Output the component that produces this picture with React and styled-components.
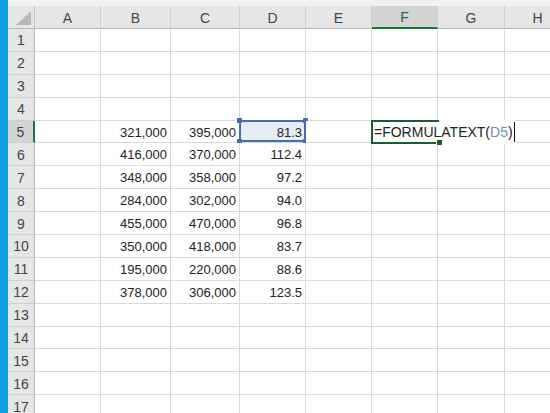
import styled, { createGlobalStyle } from "styled-components";

const GlobalStyle = createGlobalStyle`
  * { box-sizing: border-box; }
  body {
    margin: 0;
    background: #ffffff;
    font-family: "Liberation Sans", Arial, sans-serif;
  }
`;

const Page = styled.div`
  width: 550px;
  height: 413px;
  display: flex;
  overflow: hidden;
`;

const Strip = styled.div`
  width: 8px;
  flex-shrink: 0;
  background: #0e9fe2;
`;

const Sheet = styled.div`
  flex: 1;
  display: flex;
  flex-direction: column;
  background: #ffffff;
`;

const TopBand = styled.div`
  height: 6px;
  flex-shrink: 0;
  background: #f1f1f1;
`;

const Grid = styled.div`
  display: grid;
  grid-template-columns: 27px 66px 70px 69px 66px 66px 66px 67px 66px;
  grid-template-rows: 23px;
  grid-auto-rows: 22.9px;
`;

const Corner = styled.div`
  background: #e6e6e6;
  border-right: 1px solid #c4c4c4;
  border-bottom: 1px solid #b8b8b8;
  display: flex;
  align-items: flex-end;
  justify-content: flex-end;
  padding: 0 3px 3px 0;
`;

const ColHead = styled.div`
  background: ${(p) => (p.$active ? "#d3d3d3" : "#e6e6e6")};
  border-right: 1px solid #cfcfcf;
  border-bottom: ${(p) => (p.$active ? "2px solid #217346" : "1px solid #b8b8b8")};
  color: ${(p) => (p.$active ? "#2f5f42" : "#444444")};
  font-size: 14px;
  display: flex;
  align-items: center;
  justify-content: center;
  padding-top: 1px;
`;

const RowHead = styled.div`
  background: ${(p) => (p.$active ? "#d3d3d3" : "#e6e6e6")};
  border-right: ${(p) => (p.$active ? "2px solid #217346" : "1px solid #b8b8b8")};
  border-bottom: 1px solid #cfcfcf;
  color: #444444;
  font-size: 14px;
  display: flex;
  align-items: center;
  justify-content: center;
  padding-top: 1px;
`;

const Cell = styled.div`
  position: relative;
  background: ${(p) => (p.$refd ? "#e7edf7" : "#ffffff")};
  border-right: 1px solid #dadada;
  border-bottom: 1px solid #dadada;
  color: #222222;
  font-size: 13px;
  display: flex;
  align-items: center;
  justify-content: flex-end;
  padding: 1px 3px 0 0;
  white-space: nowrap;
`;

const RefBox = styled.div`
  position: absolute;
  left: -1px;
  top: -1px;
  right: -1px;
  bottom: 0;
  border: 2px solid #4a6da8;
  pointer-events: none;
`;

const Handle = styled.span`
  position: absolute;
  width: 5px;
  height: 5px;
  background: #4a6da8;
  ${(p) => (p.$top ? "top: -4px;" : "bottom: -4px;")}
  ${(p) => (p.$left ? "left: -4px;" : "right: -4px;")}
`;

const Editor = styled.div`
  position: absolute;
  left: -1px;
  top: -1px;
  height: 24px;
  width: 144px;
  background: #ffffff;
  z-index: 2;
  display: flex;
  align-items: center;
  padding: 1px 0 0 3px;
  font-size: 14px;
  color: #222222;
  white-space: nowrap;
`;

const EditFrame = styled.div`
  position: absolute;
  left: 0;
  top: 0;
  width: 68px;
  height: 24px;
  border: 2px solid #1f5a38;
  border-right: none;
  pointer-events: none;
`;

const FillHandle = styled.span`
  position: absolute;
  right: -3px;
  bottom: -3px;
  width: 5px;
  height: 5px;
  background: #1f5a38;
  outline: 1px solid #ffffff;
`;

const Ref = styled.span`
  color: #6f8fc2;
`;

const Caret = styled.span`
  display: inline-block;
  width: 1px;
  height: 20px;
  margin-left: 1px;
  background: #111111;
`;

const cols = ["A", "B", "C", "D", "E", "F", "G", "H"];

const data = {
  5: ["321,000", "395,000", "81.3"],
  6: ["416,000", "370,000", "112.4"],
  7: ["348,000", "358,000", "97.2"],
  8: ["284,000", "302,000", "94.0"],
  9: ["455,000", "470,000", "96.8"],
  10: ["350,000", "418,000", "83.7"],
  11: ["195,000", "220,000", "88.6"],
  12: ["378,000", "306,000", "123.5"],
};

const rows = Array.from({ length: 17 }, (_, i) => i + 1);

const CornerMark = () => (
  <svg width="15" height="14" viewBox="0 0 15 14">
    <polygon points="15,0 15,14 0,14" fill="#b9b9b9" />
  </svg>
);

const App = () => {
  return (
    <Page>
      <GlobalStyle />
      <Strip />
      <Sheet>
        <TopBand />
        <Grid>
          <Corner>
            <CornerMark />
          </Corner>
          {cols.map((c) => (
            <ColHead key={c} $active={c === "F"}>
              {c}
            </ColHead>
          ))}
          {rows.map((r) => {
            const vals = data[r] || [];
            return [
              <RowHead key={`h${r}`} $active={r === 5}>
                {r}
              </RowHead>,
              ...cols.map((c, ci) => {
                const isRef = r === 5 && c === "D";
                const isEdit = r === 5 && c === "F";
                const val = ci >= 1 && ci <= 3 ? vals[ci - 1] : null;
                return (
                  <Cell key={`${c}${r}`} $refd={isRef}>
                    {val}
                    {isRef && (
                      <RefBox>
                        <Handle $top $left />
                        <Handle $top />
                        <Handle $left />
                        <Handle />
                      </RefBox>
                    )}
                    {isEdit && (
                      <Editor>
                        =FORMULATEXT(<Ref>D5</Ref>)
                        <Caret />
                        <EditFrame>
                          <FillHandle />
                        </EditFrame>
                      </Editor>
                    )}
                  </Cell>
                );
              }),
            ];
          })}
        </Grid>
      </Sheet>
    </Page>
  );
};

export default App;
